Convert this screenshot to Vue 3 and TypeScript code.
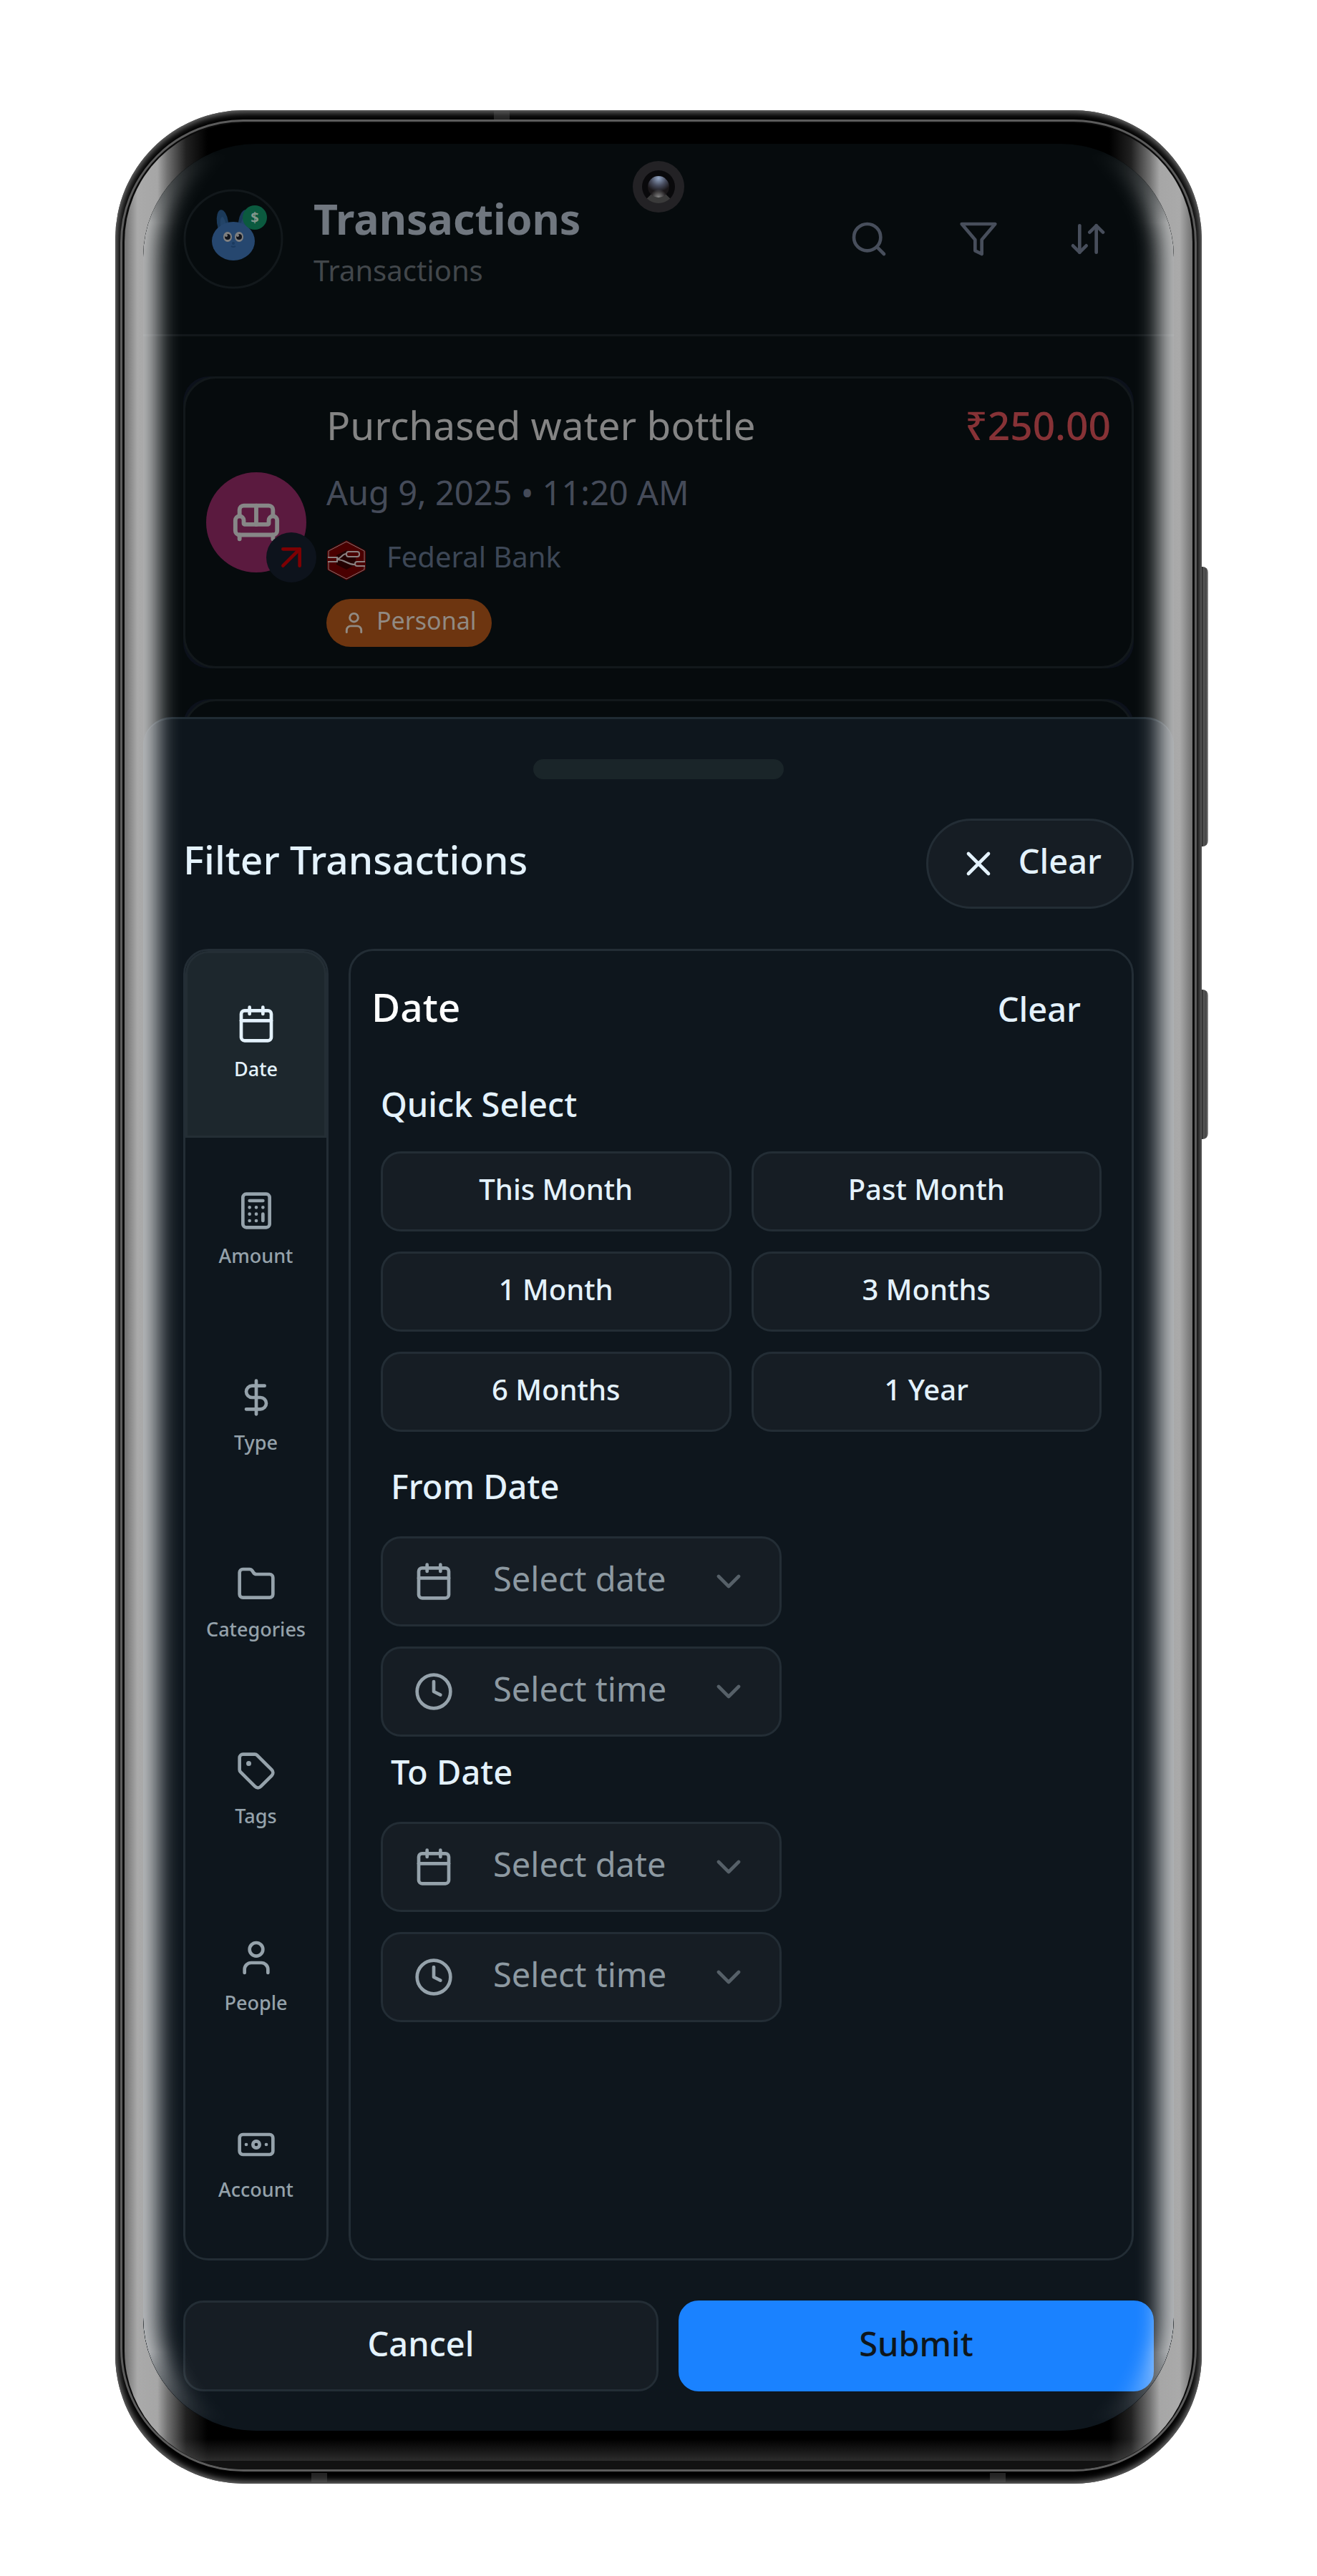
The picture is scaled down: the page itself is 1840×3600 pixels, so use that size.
<script setup lang="ts">
import { ref } from 'vue'

interface Tab {
  name: string
  shapes: string[]
}

interface Picker {
  id: string
  kind: 'date' | 'time'
}

interface Range {
  title: string
  pickers: Picker[]
}

const calendar = [
  'M8 2v4',
  'M16 2v4',
  'M3 10h18',
  'M5 4h14a2 2 0 0 1 2 2v14a2 2 0 0 1-2 2H5a2 2 0 0 1-2-2V6a2 2 0 0 1 2-2z',
]
const clock = ['M2 12a10 10 0 1 0 20 0a10 10 0 1 0-20 0', 'M12 6v6l4 2']
const person = ['M19 21v-2a4 4 0 0 0-4-4H9a4 4 0 0 0-4 4v2', 'M8 7a4 4 0 1 0 8 0a4 4 0 1 0-8 0']

const tabs: Tab[] = [
  { name: 'Date', shapes: calendar },
  {
    name: 'Amount',
    shapes: [
      'M6 2h12a2 2 0 0 1 2 2v16a2 2 0 0 1-2 2H6a2 2 0 0 1-2-2V4a2 2 0 0 1 2-2z',
      'M8 6h8',
      'M16 14v4',
      'M16 10h.01M12 10h.01M8 10h.01M12 14h.01M8 14h.01M12 18h.01M8 18h.01',
    ],
  },
  { name: 'Type', shapes: ['M12 2v20', 'M17 5H9.5a3.5 3.5 0 0 0 0 7h5a3.5 3.5 0 0 1 0 7H6'] },
  {
    name: 'Categories',
    shapes: [
      'M20 20a2 2 0 0 0 2-2V8a2 2 0 0 0-2-2h-7.9a2 2 0 0 1-1.69-.9L9.6 3.9A2 2 0 0 0 7.93 3H4a2 2 0 0 0-2 2v13a2 2 0 0 0 2 2Z',
    ],
  },
  {
    name: 'Tags',
    shapes: [
      'M12.586 2.586A2 2 0 0 0 11.172 2H4a2 2 0 0 0-2 2v7.172a2 2 0 0 0 .586 1.414l8.704 8.704a2.426 2.426 0 0 0 3.42 0l6.58-6.58a2.426 2.426 0 0 0 0-3.42z',
      'M7 7.5a.5.5 0 1 0 1 0a.5.5 0 1 0-1 0',
    ],
  },
  { name: 'People', shapes: person },
  {
    name: 'Account',
    shapes: [
      'M4 6h16a2 2 0 0 1 2 2v8a2 2 0 0 1-2 2H4a2 2 0 0 1-2-2V8a2 2 0 0 1 2-2z',
      'M10 12a2 2 0 1 0 4 0a2 2 0 1 0-4 0',
      'M6 12h.01M18 12h.01',
    ],
  },
]

const actions: Tab[] = [
  { name: 'Search', shapes: ['M3 11a8 8 0 1 0 16 0a8 8 0 1 0-16 0', 'm21 21-4.3-4.3'] },
  { name: 'Filter', shapes: ['M22 3H2l8 9.46V19l4 2v-8.54z'] },
  { name: 'Sort', shapes: ['m3 16 4 4 4-4', 'M7 20V4', 'm21 8-4-4-4 4', 'M17 4v16'] },
]

const quickRanges = ['This Month', 'Past Month', '1 Month', '3 Months', '6 Months', '1 Year']

const ranges: Range[] = [
  {
    title: 'From Date',
    pickers: [
      { id: 'from-date', kind: 'date' },
      { id: 'from-time', kind: 'time' },
    ],
  },
  {
    title: 'To Date',
    pickers: [
      { id: 'to-date', kind: 'date' },
      { id: 'to-time', kind: 'time' },
    ],
  },
]

const activeTab = ref('Date')
</script>

<template>
  <main class="stage">
    <div class="phone">
      <span class="side-key volume"></span>
      <span class="side-key power"></span>
      <span class="antenna antenna-top"></span>
      <span class="antenna antenna-left"></span>
      <span class="antenna antenna-right"></span>
      <div class="rim">
        <div class="bezel">
          <div class="screen">
            <span class="camera"><span class="lens"></span></span>

            <header class="app-bar">
              <svg class="avatar" viewBox="0 0 140 140" aria-hidden="true">
                <circle cx="70" cy="70" r="68" fill="none" stroke="#12181b" stroke-width="3" />
                <ellipse cx="55" cy="47" rx="8" ry="18" fill="#1b3a5a" transform="rotate(-8 55 47)" />
                <ellipse cx="85" cy="47" rx="8" ry="18" fill="#1b3a5a" transform="rotate(8 85 47)" />
                <ellipse cx="56" cy="52" rx="4" ry="13" fill="#234468" transform="rotate(-8 56 52)" />
                <ellipse cx="84" cy="52" rx="4" ry="13" fill="#234468" transform="rotate(8 84 52)" />
                <ellipse cx="70" cy="73" rx="30" ry="27" fill="#26476f" />
                <ellipse cx="62" cy="67" rx="6" ry="7" fill="#808080" />
                <ellipse cx="78" cy="67" rx="6" ry="7" fill="#808080" />
                <circle cx="62" cy="67" r="4" fill="#12151c" />
                <circle cx="78" cy="67" r="4" fill="#12151c" />
                <circle cx="60" cy="65" r="2" fill="#808080" />
                <circle cx="76" cy="65" r="2" fill="#808080" />
                <circle cx="70" cy="76" r="2" fill="#1b3a5f" />
                <path d="M67 80q3 2 6 0" fill="none" stroke="#1b3a5f" stroke-width="2" />
                <circle cx="100" cy="40" r="17" fill="#0b5a3f" />
                <text x="100" y="47" text-anchor="middle" class="coin">$</text>
              </svg>
              <div class="app-title">
                <h1>Transactions</h1>
                <p>Transactions</p>
              </div>
              <nav class="app-actions">
                <button v-for="a in actions" :key="a.name" type="button" :aria-label="a.name">
                  <svg class="icon" viewBox="0 0 24 24"><path v-for="d in a.shapes" :key="d" :d="d" /></svg>
                </button>
              </nav>
            </header>

            <section class="list">
              <div class="card-shell">
                <article class="card">
                  <div class="category">
                    <svg class="icon sofa" viewBox="0 0 24 24">
                      <path d="M20 9V6a2 2 0 0 0-2-2H6a2 2 0 0 0-2 2v3" />
                      <path d="M2 16a2 2 0 0 0 2 2h16a2 2 0 0 0 2-2v-5a2 2 0 0 0-4 0v1.500a.5.5 0 0 1-.5.5h-11a.5.5 0 0 1-.5-.5V11a2 2 0 0 0-4 0z" />
                      <path d="M4 18v2M20 18v2M12 4v9" />
                    </svg>
                    <span class="direction">
                      <svg class="icon" viewBox="0 0 24 24"><path d="M7 7h10v10" /><path d="M7 17 17 7" /></svg>
                    </span>
                  </div>
                  <div class="details">
                    <div class="headline">
                      <h2>Purchased water bottle</h2>
                      <strong>₹250.00</strong>
                    </div>
                    <p class="when">Aug 9, 2025 • 11:20 AM</p>
                    <div class="bank">
                      <svg class="bank-logo" viewBox="0 0 54 56" aria-hidden="true">
                        <path d="M27 0 53 14Q54 15 54 17V39Q54 41 53 42L27 56 1 42Q0 41 0 39V17Q0 15 1 14Z" fill="#4a0000" />
                        <path d="M27 14 40 21V34L27 41 13 34V21Z" fill="#230000" />
                        <path d="M27 2 52 15V41L27 54 2 41V15Z" fill="none" stroke="#857272" stroke-width="1" />
                        <g fill="#4a0000" stroke="#8a8080" stroke-width="2">
                          <path d="M1 24H14V30H1" />
                          <path d="M14 26C20 26 20 19 27 19" fill="none" />
                          <path d="M14 27C26 27 27 34 39 34" fill="none" />
                          <rect x="27" y="16" width="18" height="7" rx="3" />
                          <path d="M53 30H42Q39 30 39 33T42 36H53" />
                        </g>
                      </svg>
                      <span>Federal Bank</span>
                    </div>
                    <span class="chip">
                      <svg class="icon" viewBox="0 0 24 24"><path v-for="d in person" :key="d" :d="d" /></svg>
                      <span class="label">Personal</span>
                    </span>
                  </div>
                </article>
              </div>
              <div class="card-shell">
                <article class="card next"></article>
              </div>
            </section>

            <section class="sheet" role="dialog" aria-labelledby="sheet-title">
              <span class="handle"></span>
              <div class="sheet-head">
                <h2 id="sheet-title">Filter Transactions</h2>
                <button type="button" class="clear-all">
                  <svg class="icon" viewBox="0 0 24 24"><path d="M18 6 6 18M6 6l12 12" /></svg>
                  <span class="label">Clear</span>
                </button>
              </div>

              <div class="sheet-body">
                <nav class="tabs">
                  <button
                    v-for="t in tabs"
                    :key="t.name"
                    type="button"
                    class="tab"
                    :class="{ active: t.name === activeTab }"
                    @click="activeTab = t.name"
                  >
                    <svg class="icon" viewBox="0 0 24 24"><path v-for="d in t.shapes" :key="d" :d="d" /></svg>
                    <span>{{ t.name }}</span>
                  </button>
                </nav>

                <div class="panel">
                  <div class="panel-head">
                    <h3>Date</h3>
                    <button type="button">Clear</button>
                  </div>
                  <div class="panel-body">
                    <h4>Quick Select</h4>
                    <div class="quick">
                      <button v-for="q in quickRanges" :key="q" type="button">
                        <span class="label">{{ q }}</span>
                      </button>
                    </div>
                    <fieldset v-for="r in ranges" :key="r.title" class="range">
                      <legend>{{ r.title }}</legend>
                      <label v-for="p in r.pickers" :key="p.id" class="picker" :for="p.id">
                        <svg class="icon" viewBox="0 0 24 24">
                          <path v-for="d in p.kind === 'date' ? calendar : clock" :key="d" :d="d" />
                        </svg>
                        <select :id="p.id" :aria-label="r.title + ' ' + p.kind">
                          <option>Select {{ p.kind }}</option>
                        </select>
                        <svg class="icon chevron" viewBox="0 0 24 24"><path d="m6 9 6 6 6-6" /></svg>
                      </label>
                    </fieldset>
                  </div>
                </div>
              </div>

              <footer class="sheet-foot">
                <button type="button"><span class="label">Cancel</span></button>
                <button type="button" class="primary"><span class="label">Submit</span></button>
              </footer>
            </section>
            <span class="glare"></span>
          </div>
        </div>
      </div>
    </div>
  </main>
</template>

<style>
body {
  margin: 0;
  background: #fff;
}
</style>

<style scoped>
.stage {
  --text: #e4f2fc;
  --muted: #95a2ab;
  --line: #232d35;
  --sheet: #0e161d;
  --raised: #161d24;
  box-sizing: border-box;
  padding: 154px 161px 128px;
  font-family: 'Noto Sans', 'Open Sans', sans-serif;
  color: var(--text);
}
.stage *,
.stage *::before {
  box-sizing: border-box;
}
h1,
h2,
h3,
h4,
p {
  margin: 0;
  font-weight: 500;
}
button {
  margin: 0;
  padding: 0;
  border: 0;
  background: none;
  color: inherit;
  font: inherit;
  cursor: pointer;
}
.icon {
  flex: none;
  width: 56px;
  height: 56px;
  fill: none;
  stroke: currentColor;
  stroke-width: 2;
  stroke-linecap: round;
  stroke-linejoin: round;
}
.label {
  padding-bottom: 8px;
}

/* Device body */
.phone {
  position: relative;
  padding: 13px 7px 17px;
  border-radius: 180px;
  background: #000;
  box-shadow: inset 0 0 10px 3px #777;
}
.side-key {
  position: absolute;
  left: 100%;
  width: 9px;
  border-radius: 0 8px 8px 0;
  background: linear-gradient(90deg, #222, #555 30%, #444 70%, #999);
}
.volume {
  top: 638px;
  height: 391px;
}
.power {
  top: 1229px;
  height: 209px;
}
.antenna {
  position: absolute;
  width: 22px;
  height: 13px;
  background: rgba(90, 90, 90, 0.4);
}
.antenna-top {
  top: 0;
  left: 529px;
}
.antenna-left {
  bottom: 2px;
  left: 274px;
}
.antenna-right {
  bottom: 2px;
  right: 274px;
}
.rim {
  padding: 2px 3px 0;
  border: 3px solid #5c5c5c;
  border-radius: 172px;
  background: #0a0a0a;
}
.bezel {
  padding: 29px 26px 54px;
  border-radius: 166px;
  background:
    linear-gradient(90deg, #707070, #aaa 18px, #a6a6a6 46px, rgba(150, 150, 150, 0.75) 60px, rgba(130, 130, 130, 0.25) 86px, transparent 116px),
    linear-gradient(270deg, #707070, #aaa 18px, #a6a6a6 46px, rgba(150, 150, 150, 0.75) 60px, rgba(130, 130, 130, 0.25) 86px, transparent 116px),
    linear-gradient(0deg, #121212 12px, #2c2c2c 12px, #000 42px);
}
.screen {
  position: relative;
  overflow: hidden;
  border-radius: 158px;
  background: #060b0d;
}
.glare {
  position: absolute;
  inset: 0;
  z-index: 3;
  border-radius: inherit;
  pointer-events: none;
  box-shadow:
    inset 51px 0 30px -30px rgba(255, 255, 255, 0.72),
    inset -51px 0 30px -30px rgba(255, 255, 255, 0.72);
  mask-image: linear-gradient(180deg, transparent 10px, #000 110px, #000 calc(100% - 110px), transparent calc(100% - 10px));
}
.camera {
  position: absolute;
  top: 24px;
  left: 50%;
  display: grid;
  place-items: center;
  width: 72px;
  height: 72px;
  margin-left: -36px;
  border-radius: 50%;
  background: #232225;
}
.lens {
  width: 46px;
  height: 46px;
  border: 8px solid #09090b;
  border-bottom-color: #3a3a3a;
  border-radius: 50%;
  background:
    radial-gradient(circle at 50% 100%, #8a8a8a, transparent 35%),
    radial-gradient(circle at 50% 10%, #93a6c4, #45495a 35%, #1a1719 62%);
}

/* App behind the sheet */
.app-bar {
  display: flex;
  align-items: center;
  padding: 58px 56px;
  border-bottom: 3px solid #12171a;
}
.avatar {
  flex: none;
  width: 140px;
  height: 140px;
}
.coin {
  fill: #84968d;
  font-size: 20px;
  font-weight: 700;
}
.app-title {
  flex: 1;
  padding: 4px 0 0 42px;
}
.app-title h1 {
  color: #70777f;
  font-size: 59px;
  font-weight: 700;
  line-height: 84px;
}
.app-title p {
  color: #42474b;
  font-size: 40px;
  font-weight: 400;
  line-height: 62px;
}
.app-actions {
  display: flex;
  gap: 25px;
  color: #474e5b;
}
.app-actions button {
  display: grid;
  place-items: center;
  width: 128px;
  height: 128px;
}
.list {
  display: flex;
  flex-direction: column;
  gap: 43px;
  padding: 56px 56px 0;
}
.card-shell {
  border-radius: 36px;
  background: #0c111b;
}
.card {
  display: flex;
  align-items: center;
  gap: 28px;
  padding: 27px 29px;
  border: 3px solid #12181b;
  border-radius: 46px;
  background: #060b0d;
}
.card.next {
  height: 92px;
}
.category {
  position: relative;
  display: grid;
  flex: none;
  place-items: center;
  width: 140px;
  height: 140px;
  border-radius: 50%;
  background: #5b1a3f;
  color: #878787;
}
.sofa {
  width: 70px;
  height: 70px;
}
.direction {
  position: absolute;
  right: -14px;
  bottom: -14px;
  display: grid;
  place-items: center;
  width: 70px;
  height: 70px;
  border-radius: 50%;
  background: #0d131c;
  color: #7d0003;
}
.details {
  display: flex;
  flex: 1;
  flex-direction: column;
  align-items: flex-start;
}
.headline {
  display: flex;
  justify-content: space-between;
  align-self: stretch;
  font-size: 55px;
  line-height: 76px;
}
.headline h2 {
  color: #848484;
  font-size: 55px;
  font-weight: 400;
}
.headline strong {
  color: #863236;
  font-weight: 500;
}
.when {
  margin: 20px 0 31px;
  color: #454b59;
  font-size: 47px;
  font-weight: 400;
  line-height: 72px;
}
.bank {
  display: flex;
  gap: 28px;
  margin-bottom: 26px;
  color: #3d4756;
  font-size: 40px;
  line-height: 46px;
}
.bank-logo {
  width: 56px;
  height: 56px;
}
.chip {
  display: flex;
  align-items: center;
  gap: 14px;
  height: 67px;
  padding: 0 21px;
  border-radius: 34px;
  background: #6d3510;
  color: #918a83;
  font-size: 34px;
  line-height: 44px;
}
.chip .icon {
  width: 35px;
  height: 35px;
}

/* Filter sheet */
.sheet {
  position: relative;
  z-index: 2;
  display: flex;
  flex-direction: column;
  margin-top: -67px;
  padding: 56px 56px 55px;
  border-top: 3px solid #202b33;
  border-radius: 40px 40px 0 0;
  background: var(--sheet);
}
.handle {
  align-self: center;
  width: 350px;
  height: 28px;
  border-radius: 14px;
  background: #1a2529;
}
.sheet-head {
  display: flex;
  align-items: center;
  justify-content: space-between;
  margin: 55px 0 56px;
}
.sheet-head h2 {
  padding-bottom: 12px;
  font-size: 55px;
  line-height: 74px;
}
.clear-all {
  display: flex;
  align-items: center;
  gap: 28px;
  height: 126px;
  padding: 0 42px;
  border: 3px solid var(--line);
  border-radius: 63px;
  background: var(--raised);
  font-size: 47px;
  font-weight: 500;
}
.sheet-body {
  display: flex;
  gap: 28px;
}
.tabs {
  display: flex;
  flex: none;
  flex-direction: column;
  overflow: hidden;
  width: 203px;
  border: 3px solid var(--line);
  border-radius: 35px;
}
.tab {
  display: flex;
  flex-direction: column;
  align-items: center;
  gap: 16px;
  padding: 74px 0 77px;
  color: var(--muted);
  font-size: 27px;
  font-weight: 500;
  line-height: 38px;
}
.tab.active {
  border-radius: 32px 32px 0 0;
  background: #1d272d;
  box-shadow: inset 0 0 0 3px #242e35;
  color: var(--text);
}
.panel {
  flex: 1;
  padding: 29px;
  border: 3px solid var(--line);
  border-radius: 35px;
}
.panel-head {
  display: flex;
  align-items: baseline;
  justify-content: space-between;
}
.panel-head h3 {
  color: #fff;
  font-size: 55px;
  line-height: 98px;
}
.panel-head button {
  padding: 0 42px;
  font-size: 47px;
  font-weight: 500;
  line-height: 86px;
}
.panel-body {
  padding: 0 13px;
}
.panel-body h4 {
  margin: 55px 0 34px;
  font-size: 47px;
  line-height: 64px;
}
.quick {
  display: grid;
  grid-template-columns: 1fr 1fr;
  gap: 28px;
  margin-bottom: 44px;
}
.quick button {
  display: grid;
  place-items: center;
  height: 112px;
  border: 3px solid var(--line);
  border-radius: 28px;
  background: var(--raised);
  font-size: 40px;
  font-weight: 500;
}
.range {
  display: flex;
  flex-direction: column;
  gap: 28px;
  margin: 0 0 17px;
  padding: 0;
  border: 0;
}
.range legend {
  margin-bottom: 38px;
  padding: 0 14px;
  font-size: 47px;
  font-weight: 500;
  line-height: 64px;
}
.picker {
  display: flex;
  align-items: center;
  width: 560px;
  height: 126px;
  padding: 0 43px;
  border: 3px solid var(--line);
  border-radius: 28px;
  background: var(--raised);
  color: var(--muted);
}
.picker .chevron {
  color: #566068;
  pointer-events: none;
}
.picker select {
  flex: 1;
  min-width: 0;
  margin: 0 0 0 55px;
  padding: 0 0 8px;
  border: 0;
  outline: 0;
  appearance: none;
  background: none;
  color: #8d99a1;
  font-family: inherit;
  font-size: 47px;
  font-weight: 400;
  line-height: 64px;
}
.sheet-foot {
  display: grid;
  grid-template-columns: 1fr 1fr;
  gap: 28px;
  margin: 56px -28px 0 0;
}
.sheet-foot button {
  display: grid;
  place-items: center;
  height: 127px;
  border: 3px solid var(--line);
  border-radius: 28px;
  background: var(--raised);
  font-size: 47px;
  font-weight: 500;
}
.sheet-foot .primary {
  border-color: #1a82ff;
  background: #1a82ff;
  color: #0e171d;
}
</style>
